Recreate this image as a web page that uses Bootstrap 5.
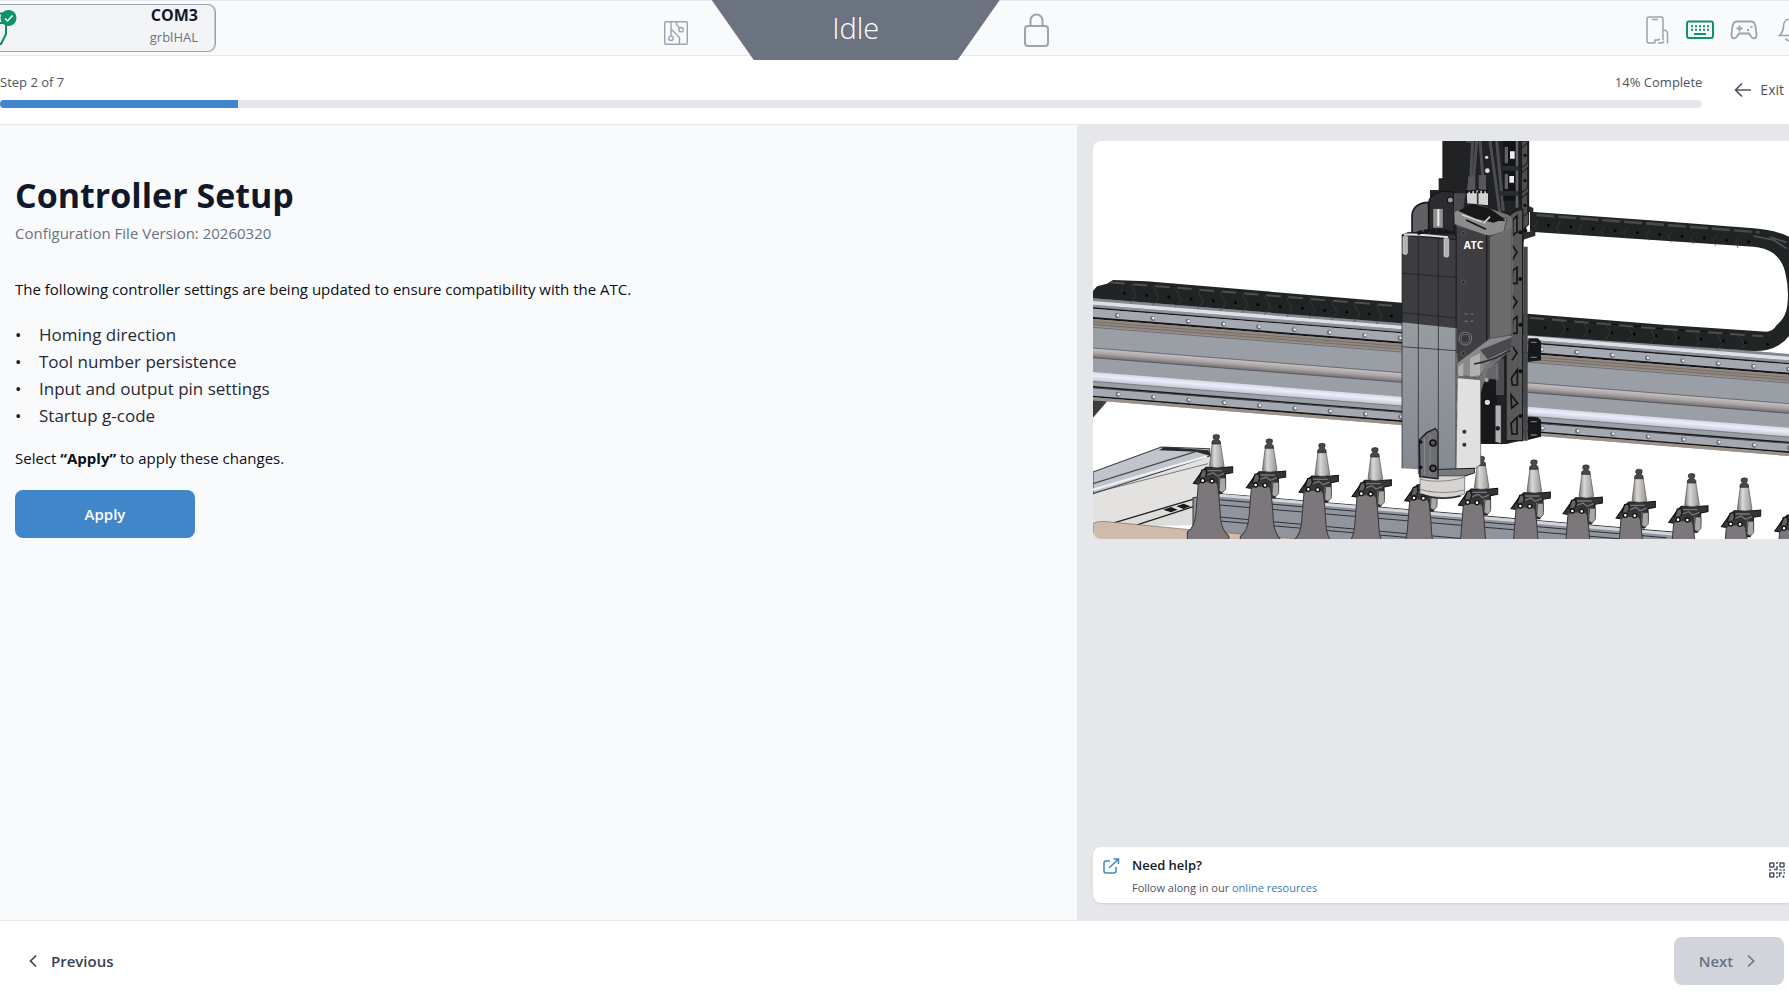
<!DOCTYPE html>
<html lang="en">
<head>
<meta charset="utf-8">
<meta name="viewport" content="width=device-width, initial-scale=1">
<title>Controller Setup</title>
<link href="https://cdn.jsdelivr.net/npm/bootstrap@5.3.0/dist/css/bootstrap.min.css" rel="stylesheet">
<style>
body{font-family:"Open Sans","Noto Sans",sans-serif;font-size:15px;line-height:24px;color:#111827;background:#fff;overflow-x:hidden}
.topbar{height:56px;background:#f9fafc;border-top:1px solid #e5e7eb;border-bottom:1px solid #e5e7eb}
.side-start{flex:26 1 0;min-width:0}
.side-end{flex:29 1 0;min-width:0;overflow:hidden}
.port{width:216px;height:48px;background:#f3f4f6;border:1px solid #9ca3af;border-left:0;border-radius:0 8px 8px 0;box-shadow:inset -1px 0 #c3c7ce;padding-right:17px}
.port-name{font-size:16px;line-height:22px;font-weight:700}
.port-fw{font-size:13px;line-height:22px;color:#6b7280}
.state{width:288px;height:60px;margin-top:-1px;background:#6b7280;color:#fff;clip-path:polygon(0 0,100% 0,85.4% 100%,14.6% 100%);font-size:29px;font-weight:300;z-index:2}
.tool-btn{background:none;border:0;padding:0;line-height:0;color:#9ca3af;flex:none}
.steps{border-bottom:1px solid #e5e7eb;padding:16px 5px 16px 0;color:#4b5563;font-size:13px}
.steps .step-text{line-height:20px;margin-bottom:8px}
.steps .progress{height:8px;border-radius:8px;background:#e5e7eb}
.steps .progress-bar{background:#4086c9}
.exit-btn{background:none;border:0;padding:0;color:#4b5563;font-size:14px;margin-left:32px}
.info-pane{flex:0 0 60.2%;background:#f9fafc;padding:48px 15px}
.info-pane h1{font-size:34px;line-height:44px;font-weight:700;margin:0 0 4px}
.version{color:#6b7280}
.blk{color:#0b0f16}
.settings{font-size:17px;line-height:27px;color:#1f2937;margin:20px 0 17px}
.settings li::before{content:"•";display:inline-block;width:24px;color:#111827}
.apply-btn{width:180px;height:48px;margin-top:20px;background:#4086c9;color:#fff;font-weight:600;font-size:15px;border:0;border-radius:8px}
.media-pane{background:#e5e7eb;padding:16px 0 17px 16px;min-width:0}
.machine{display:block;width:100%;height:auto;background:#fff;border-radius:8px 0 0 8px}
.help{background:#fff;border-radius:8px 0 0 8px;height:56px;padding:8px 4px 8px 10px;box-shadow:0 1px 2px rgba(0,0,0,.1)}
.help-icon{margin-top:3px}
.help-title{font-size:13px;line-height:20px;font-weight:600}
.help-text{font-size:11px;line-height:16px;color:#4b5563;margin-top:5px}
.help-text a{color:#3d77b5;text-decoration:none}
.qr-btn{margin-top:7px}
.foot{border-top:1px solid #e5e7eb;padding:16px 5px 21px 29px}
.nav-btn{height:48px;border:0;border-radius:8px;font-size:15px;font-weight:600;background:none;color:#374151;padding:0;gap:14px}
.nav-next{width:110px;background:#d1d5db;color:#6b7280}
</style>
<script src="https://cdn.jsdelivr.net/npm/bootstrap@5.3.0/dist/js/bootstrap.bundle.min.js"></script>
</head>
<body>
<div class="d-flex flex-column min-vh-100">

<header class="topbar d-flex">
  <div class="side-start d-flex align-items-center justify-content-between">
    <div class="port d-flex justify-content-between align-items-center">
      <svg width="20" height="46" viewBox="0 4 20 46" fill="none" aria-hidden="true"><path d="M0 12.500H6M0 22H6V33L1 43H0" stroke="#0d8a61" stroke-width="2"/><circle cx="8.500" cy="17" r="8" fill="#0d9467"/><path d="M5 17.500l2.500 2.500 5-5.500" stroke="#fff" stroke-width="1.500"/></svg>
      <div class="text-end pb-1"><div class="port-name">COM3</div><div class="port-fw">grblHAL</div></div>
    </div>
  </div>
  <div class="d-flex align-items-start">
    <button class="tool-btn mt-3 me-4 pt-1" aria-label="Board"><svg width="24" height="24" viewBox="0 0 24 24" fill="none" stroke="currentColor" stroke-width="1.400"><rect x=".700" y=".700" width="22.600" height="22.600" rx="1"/><path d="M7 1v14M7 8l8.500 8.500V23M12.500 1v2.500l3 3.500"/><circle cx="7" cy="17.300" r="2.200"/><circle cx="17" cy="8.700" r="2.200"/></svg></button>
    <div class="state d-flex align-items-center justify-content-center pb-1">Idle</div>
    <button class="tool-btn ms-4 mt-2 pt-1" aria-label="Unlock"><svg width="25" height="34" viewBox="0 0 25 34" fill="none" stroke="currentColor" stroke-width="2"><rect x="1" y="13" width="23" height="20" rx="3"/><path d="M6.500 13V7.500a6 6 0 0 1 12 0V13"/></svg></button>
  </div>
  <div class="side-end d-flex align-items-center justify-content-end pt-1">
    <button class="tool-btn" aria-label="Remote"><svg width="24" height="28" viewBox="0 0 24 28" fill="none" stroke="currentColor" stroke-width="1.500"><path d="M9 27H3a2 2 0 0 1-2-2V3a2 2 0 0 1 2-2h12a2 2 0 0 1 2 2v21M6 3.500h6M9 27v-3h3l2-1M12 27h4c1 0 1-1 2-2M17 14c3 0 4.500 1 4.500 4v9.500"/></svg></button>
    <button class="tool-btn ms-3" aria-label="Keyboard"><svg width="28" height="20" viewBox="0 0 28 20" fill="none" stroke="#0d9467"><rect x="1" y="1.500" width="26" height="16.500" rx="2" stroke-width="2"/><path d="M5 6.200h18M5 9.800h18" stroke-width="2" stroke-dasharray="2 2"/><path d="M8 14h12" stroke-width="2"/></svg></button>
    <button class="tool-btn ms-3" aria-label="Gamepad"><svg width="28" height="20" viewBox="0 0 28 20" fill="none" stroke="currentColor" stroke-width="1.800"><path d="M7 1.500h14c3 0 4 2 4.500 5l1 8c.500 4-3 5-5 2.500l-2.500-3.500H9L6.500 17c-2 2.500-5.500 1.500-5-2.500l1-8c.500-3 1.500-5 4.500-5z"/><path d="M9.500 5.500v6M6.500 8.500h6M17 10h2M20.500 7h2"/></svg></button>
    <button class="tool-btn ms-3 ps-1" aria-label="Notifications"><svg width="11" height="24" viewBox="2 0 11 24" fill="none" stroke="currentColor" stroke-width="1.700"><path d="M13 1.500C9 1.500 7.500 5 7.500 8c0 5-1.500 7-4 9.500H13M9.500 20.500c1 2 2 2 3.500 2.200"/></svg></button>
  </div>
</header>

<section class="steps d-flex align-items-center">
  <div class="flex-grow-1">
    <div class="step-text d-flex justify-content-between"><span>Step 2 of 7</span><span>14% Complete</span></div>
    <div class="progress" role="progressbar" aria-label="Setup progress" aria-valuenow="14" aria-valuemin="0" aria-valuemax="100"><div class="progress-bar" style="width:14%"></div></div>
  </div>
  <button class="exit-btn d-flex align-items-center"><svg class="me-2" width="18" height="16" viewBox="0 0 18 16" fill="none" stroke="currentColor" stroke-width="1.700"><path d="M17 8H1.500M8 1.500L1.500 8 8 14.500"/></svg>Exit</button>
</section>

<main class="d-flex flex-grow-1">
  <section class="info-pane">
    <h1>Controller Setup</h1>
    <div class="version">Configuration File Version: 20260320</div>
    <p class="blk mb-0 mt-4 pt-2">The following controller settings are being updated to ensure compatibility with the ATC.</p>
    <ul class="settings list-unstyled">
      <li>Homing direction</li>
      <li>Tool number persistence</li>
      <li>Input and output pin settings</li>
      <li>Startup g-code</li>
    </ul>
    <p class="blk mb-0">Select <b>“Apply”</b> to apply these changes.</p>
    <button class="apply-btn">Apply</button>
  </section>

  <aside class="media-pane flex-grow-1 d-flex flex-column justify-content-between">
    <svg class="machine" viewBox="0 0 2088 1194" role="img" aria-label="CNC gantry with automatic tool changer">
      <defs>
        <linearGradient id="tube" x2="0" y2="1"><stop offset="0" stop-color="#c9c3c3"/><stop offset=".5" stop-color="#aaa4a5"/><stop offset="1" stop-color="#716d70"/></linearGradient>
        <linearGradient id="cone"><stop offset="0" stop-color="#777"/><stop offset=".35" stop-color="#dad8d6"/><stop offset="1" stop-color="#969290"/></linearGradient>
        <linearGradient id="shine" x2="0" y2="1"><stop offset="0" stop-color="#d6d9e4"/><stop offset=".4" stop-color="#eceffb"/><stop offset="1" stop-color="#c0c4d0"/></linearGradient>
        <linearGradient id="lower" x2="0" y2="1"><stop offset="0" stop-color="#979ca1"/><stop offset="1" stop-color="#858991"/></linearGradient>
        <g id="holder">
          <path d="M-44 112l14-14h58l22-2v18l-22 4v36l-10 22h-16l-8-20-62-10z" fill="#343436" stroke="#111" stroke-width="3"/>
          <path d="M-26 108h44M-30 122l22-8 12 10 20-8M10 128v28" stroke="#75757a" stroke-width="4" fill="none"/>
          <path d="M12 130h17v34l-10 10-10-6z" fill="#aaa8a6" stroke="#333" stroke-width="2"/>
          <path d="M-50 130l8-24 12-2 2 14-8 20z" fill="#626166" stroke="#151515" stroke-width="4"/>
          <path d="M-52 134q24-12 52 0l5 18q6 50 8 92 2 40 26 62v60H-86v-74q22-14 26-58z" fill="#7b777b" stroke="#39383b" stroke-width="3"/>
          <path d="M-52 134l8-6h36l10 8 4 16-8-8-40-2-10 8z" fill="#38383a"/>
          <circle cx="-40" cy="138" r="6" fill="#fff" stroke="#111" stroke-width="4"/><circle cx="-12" cy="139" r="6" fill="#fff" stroke="#111" stroke-width="4"/>
          <path d="M-11 24h24l11 70q-22 10-44 0z" fill="url(#cone)" stroke="#55504e" stroke-width="2"/>
          <path d="M-8 2q9-5 18 0v8l-3 4 6 6v8h-25v-8l7-6-4-4z" fill="#48484a" stroke="#222" stroke-width="2"/>
        </g>
      </defs>

      <!-- side arm and bed -->
      <path d="M0 775h48L0 830z" fill="#3d3d40"/>
      <path d="M0 1000l210-72 140 8-8 110-46 32-228 92-68-18z" fill="#e3e2e0"/>
      <path d="M0 993l205-75 145 5v22L0 1058z" fill="#c1c4ca" stroke="#3b3c3f" stroke-width="3"/>
      <path d="M0 1028l310-97" stroke="#48494c" stroke-width="4"/><path d="M0 1046l342-100" stroke="#eef0f4" stroke-width="7"/><path d="M0 1056l345-88" stroke="#444" stroke-width="2"/>
      <path d="M198 928l16-10 132 10 10 18-48-14z" fill="#292a2c"/>
      <path d="M68 1144l240-78 60 10v75L130 1156z" fill="#dddddb"/><path d="M60 1146l250-74M130 1152l180-58" stroke="#222" stroke-width="4"/>
      <path d="M210 1106l24-8 20 8-20 8zM250 1096l22-8 20 8-20 8z" fill="#181818"/>
      <path d="M300 1070l80-12 1420 120v40H300z" fill="#90959d" stroke="#333" stroke-width="3"/>
      <path d="M380 1063l1420 121" stroke="#d2d5dc" stroke-width="9"/><path d="M380 1076l1340 114M380 1092l1280 108M380 1128l900 80M380 1140l800 70" stroke="#2e3033" stroke-width="3"/>
      <path d="M0 1148q10-8 42-6l250 24 350 30H0z" fill="#d0baa9" stroke="#786b60" stroke-width="2"/>

      <!-- beam -->
      <g transform="skewY(4.574)">
        <rect y="472" width="2088" height="306" fill="#9a9ea5"/>
        <rect y="472" width="2088" height="14" fill="#84888e"/><rect y="480" width="2088" height="11" fill="#dde0e7"/><rect y="491" width="2088" height="9" fill="#8f949b"/>
        <rect y="499" width="2088" height="4" fill="#17181a"/><rect y="503" width="2088" height="26" fill="#a4a9b1"/><rect y="528" width="2088" height="6" fill="#141416"/>
        <rect y="534" width="2088" height="22" fill="#91887f"/><path d="M0 542h2088M0 550h2088" stroke="#6a625b" stroke-width="2"/><path d="M0 559h2088" stroke="#56575a" stroke-width="2"/>
        <rect y="621" width="2088" height="29" fill="url(#tube)"/><path d="M0 621h2088M0 650h2088" stroke="#4a4a4d" stroke-width="2"/>
        <rect y="693" width="2088" height="28" fill="url(#shine)"/><path d="M0 721h2088" stroke="#63666c" stroke-width="2"/>
        <rect y="735" width="2088" height="5" fill="#17181a"/><rect y="742" width="2088" height="24" fill="#a4a9b1"/><path d="M0 740h2088" stroke="#44464a" stroke-width="3"/><rect y="764" width="2088" height="5" fill="#141416"/><rect y="769" width="2088" height="9" fill="#9b9188"/>
        <g fill="none" stroke-linecap="round"><path d="M73 518h2020M75 754h2020" stroke="#6b6e73" stroke-width="15" stroke-dasharray="0 106"/><path d="M75 517h2020M77 753h2020" stroke="#eee" stroke-width="8" stroke-dasharray="0 106"/></g>
      </g>

      <!-- cable chain -->
      <path d="M0 450l12-14 30-8 18-11 100 4 767 64 364 32 420 34 310 21q20-2 30-20 28-22 32-60 6-50-7-100-8-34-35-55-26-18-60-20L1311 272V212l360 26 310 24q60 4 107 25V585q-24 32-67 42-30 6-80 0L1291 582 927 547 0 472z" fill="#202424"/>
      <path d="M52 424l870 72M1310 530l400 34 300 22" stroke="#4b504f" stroke-width="6" stroke-dasharray="44 23"/><path d="M1330 222l340 26 330 26" stroke="#454a49" stroke-width="8" stroke-dasharray="54 12"/>
      <path d="M1981 285l60 12 40 26M2030 288l50 16" stroke="#505356" stroke-width="5" fill="none"/>
      <g fill="none" stroke="#050606" stroke-width="9" stroke-linecap="round" stroke-dasharray="0 67"><path d="M94 457l830 70M1366 252l610 51M1356 560l670 50"/></g>
      <g fill="none" stroke="#3c4140" stroke-width="2"><path d="M112 430l18 35-18 22M179 436l18 35-18 22M246 441l18 35-18 22M313 447l18 35-18 22M380 453l18 35-18 22M447 458l18 35-18 22M514 464l18 35-18 22M581 470l18 35-18 22M648 475l18 35-18 22M715 481l18 35-18 22M782 487l18 35-18 22M849 492l18 35-18 22M1336 236l-12 18 8 16M1403 241l-12 18 8 16M1470 247l-12 18 8 16M1537 253l-12 18 8 16M1604 258l-12 18 8 16M1671 264l-12 18 8 16M1738 270l-12 18 8 16M1805 275l-12 18 8 16M1872 281l-12 18 8 16M1939 287l-12 18 8 16M1400 530l18 35-16 20M1467 536l18 35-16 20M1534 542l18 35-16 20M1601 548l18 35-16 20M1668 554l18 35-16 20M1735 560l18 35-16 20M1802 566l18 35-16 20M1869 572l18 35-16 20M1936 578l18 35-16 15"/></g>

      <!-- tool rack -->
      <use href="#holder" x="369" y="881"/><use href="#holder" x="528" y="894"/><use href="#holder" x="686" y="907"/><use href="#holder" x="845" y="920"/><use href="#holder" x="1003" y="933"/><use href="#holder" x="1164" y="946"/><use href="#holder" x="1322" y="957"/><use href="#holder" x="1478" y="972"/><use href="#holder" x="1637" y="985"/><use href="#holder" x="1795" y="998"/><use href="#holder" x="1953" y="1011"/><use href="#holder" x="2113" y="1024"/>

      <!-- spindle carriage -->
      <g transform="translate(861 -63)">
        <path d="M187 63H447V280L430 370V960L380 972H300V700H150V210H176V175H187z" fill="#202224"/>
        <path d="M258 63h20l-6 110-10 45M290 63l-10 120M300 63l10 130M330 63l30 220M350 63l20 210" stroke="#4c4d50" stroke-width="9" fill="none"/>
        <path d="M264 170h22v45h-22zM296 165h22v45h-22z" fill="#55575a"/><path d="M258 215l36-6 32 4v45l-66-6z" fill="#d2d2d1" stroke="#222" stroke-width="4"/><path d="M258 215h66" stroke="#111" stroke-width="9" stroke-dasharray="7 5"/><path d="M293 215v42" stroke="#333" stroke-width="5"/>
        <path d="M370 63h48v180h-48z" fill="#131416"/><path d="M374 80h10v50h-10zM374 162h10v45h-10zM407 63h8v200h-8z" fill="#606266"/><path d="M390 94h14v22h-14zM388 168h14v20h-14z" fill="#eee"/><path d="M366 145h50M360 220h56" stroke="#2a2c2f" stroke-width="14"/>
        <path d="M424 63h22v250l-22 20z" fill="#4c4d50" stroke="#181818" stroke-width="3"/><path d="M425 83l18-15v60l-18 15M425 158l18-15v60l-18 15M425 233l18-15v60l-18 15" fill="none" stroke="#19191a" stroke-width="3"/><g fill="#111"><circle cx="435" cy="106" r="5"/><circle cx="435" cy="182" r="5"/><circle cx="435" cy="256" r="5"/><circle cx="436" cy="332" r="6"/></g>
        <path d="M446 258l14 6v12h-14zM430 335h36v12l-36 12z" fill="#2b2c2e"/>
        <circle cx="322" cy="152" r="7" fill="#ddd"/><circle cx="320" cy="112" r="5" fill="#ddd"/>
        <path d="M96 340V285q4-36 50-38v90z" fill="#606164" stroke="#1a1a1b" stroke-width="5"/><path d="M147 240q10-22 45-26l30 2v120h-74z" fill="#2b2c2f" stroke="#111" stroke-width="3"/><circle cx="211" cy="240" r="9" fill="#9a9a9a" stroke="#111" stroke-width="3"/>
        <path d="M158 265h32v60h-32z" fill="#8e9091" stroke="#222" stroke-width="3"/><path d="M172 268h6v50h-6z" fill="#eee"/>
        <path d="M222 220h34l-6 50-28 25z" fill="#4a4b4e"/>
        <path d="M384 290q20-20 44-22V962H378V700l10-14z" fill="#58595b" stroke="#1a1a1b" stroke-width="4"/><path d="M430 380h13v582h-13z" fill="#464749"/>
        <g fill="#58595c" stroke="#151515" stroke-width="5"><path d="M398 300l13-12v48l-13 10zM396 375l15 22-15 24M398 452l13-10v48h-15zM396 526l15 20-15 22M398 600l13-10v50h-15zM396 677l15 22-15 22M394 775l18-26v46h-15zM393 824l20 26-18 14zM393 910l18-18v50h-15z"/></g>
        <g fill="#111"><circle cx="421" cy="337" r="6"/><circle cx="421" cy="477" r="6"/><circle cx="421" cy="614" r="6"/><circle cx="421" cy="754" r="6"/><circle cx="421" cy="888" r="6"/></g>
        <path d="M445 655h28l10 10v56l-40 5zM443 890l30 2 10 8v50l-40 10z" fill="#17181a"/><path d="M452 667h18M452 712h18M452 905h18M452 945h18" stroke="#707276" stroke-width="4"/>
        <path d="M303 770h48v200h-48z" fill="#16181a"/><path d="M345 855h19v116l-19-4z" fill="#aeb0b3" stroke="#222" stroke-width="3"/><circle cx="319" cy="779" r="9" fill="#aaa" stroke="#222" stroke-width="4"/><circle cx="322" cy="847" r="10" fill="#ddd" stroke="#111" stroke-width="4"/><circle cx="353" cy="925" r="7" fill="#222"/><path d="M348 715h24v110h-24z" fill="#4b4c4f"/>

        <path d="M66 345L228 358 230 625 66 607z" fill="#3d3c41"/><path d="M66 607l164 18-2 430L66 1045z" fill="url(#lower)"/>
        <path d="M66 345l162 13M66 460l162 12M66 578l162 16M66 680l162 12M115 352v710M175 356v576M228 355v702M66 345v700" stroke="#18191c" stroke-width="2" fill="none"/>
        <path d="M66 345l20-8 140 6 4 16z" fill="#303235" stroke="#111" stroke-width="2"/><path d="M72 344q40-3 132 8" fill="none" stroke="#e2e2e2" stroke-width="6"/><path d="M112 340q40-14 100-4" fill="none" stroke="#17181a" stroke-width="12" stroke-dasharray="16 4"/>
        <path d="M69 350h13v50l-4 4-9-3zM192 356h14v52l-4 4-10-3z" fill="#b4b2b0" stroke="#ddd" stroke-width="2"/>

        <path d="M222 275l70-22 94 32 12 12v390l-75 60-20 70-70-40V330z" fill="#737374"/>
        <path d="M222 275l24-10 65 20 70 10-12 50-50 2-96-34z" fill="#8b8c8c" stroke="#333" stroke-width="2"/><path d="M240 272l40-18 48 14 40 28-28 10-52-12zM258 300l60 28M310 295l64 6" fill="#17181a" stroke="#17181a" stroke-width="5"/><path d="M246 284l60 22M330 290l-20 20" stroke="#d0d0d0" stroke-width="5"/>
        <path d="M230 318l96 30 70-22v322l-66 20-98 62z" fill="#3f3e43"/><path d="M330 350l65-28v320l-65 28z" fill="#6c6c6d"/><path d="M320 345v318" stroke="#18191b" stroke-width="4"/>
        <path d="M230 730l100-75 66-10v40l-70 46-30 42-66-8z" fill="#8a8a8b" stroke="#414144" stroke-width="2"/><path d="M300 690l95-38v32l-72 34z" fill="#48494c"/><path d="M270 715l30-15v65l-30 5zM235 740l15-12v40h-15z" fill="#b0b0af"/><path d="M282 732q60-10 110-42" stroke="#2e2e30" stroke-width="5" fill="none"/><path d="M310 730h45v50l-45-6z" fill="#77787a" opacity=".8"/>
        <circle cx="256" cy="656" r="19" fill="#38373b" stroke="#77777a" stroke-width="3"/><circle cx="256" cy="656" r="13" fill="none" stroke="#88888a" stroke-width="2"/>
        <g fill="#29292c" stroke="#74747a" stroke-width="2"><circle cx="250" cy="340" r="6"/><circle cx="250" cy="486" r="6"/><circle cx="250" cy="700" r="6"/></g><path d="M254 582h36M254 604h36" stroke="#828286" stroke-width="3" stroke-dasharray="8 10"/>
        <text x="251" y="387" font-family="Open Sans, sans-serif" font-size="31" font-weight="700" fill="#fff">ATC</text>

        <path d="M232 773l70 6v254l-22 16-52 6z" fill="#e2e0de" stroke="#4a4a4a" stroke-width="2"/><circle cx="253" cy="935" r="6" fill="#333"/><circle cx="253" cy="974" r="6" fill="#333"/>
        <path d="M118 1050l165-5v14l-30 10H118z" fill="#77797c" stroke="#222" stroke-width="3"/>
        <path d="M120 1068h134v54q-60 22-134 0z" fill="#d6d4d2" stroke="#555" stroke-width="2"/><path d="M120 1078q60 14 134-6M120 1108q60 18 134 2" stroke="#8c8a88" stroke-width="3" fill="none"/><path d="M122 1122q55 22 120 6" stroke="#2a2a2a" stroke-width="5" fill="none"/>
        <path d="M118 960l22-22 26-12 8 10v140l-54-6z" fill="#6c6e72" stroke="#1d1e20" stroke-width="4"/><path d="M134 955v110M150 945v120" stroke="#8a8c90" stroke-width="3"/><g fill="#555" stroke="#101010" stroke-width="5"><circle cx="159" cy="969" r="9"/><circle cx="159" cy="1045" r="9"/><circle cx="122" cy="966" r="3"/><circle cx="122" cy="1042" r="3"/></g>
      </g>
    </svg>

    <div class="help d-flex justify-content-between align-items-start">
      <div class="d-flex align-items-start">
        <svg class="help-icon me-2" width="17" height="16" viewBox="0 0 17 16" fill="none" stroke="#4086c9" stroke-width="1.500"><path d="M7 3H3a2 2 0 0 0-2 2v8a2 2 0 0 0 2 2h8a2 2 0 0 0 2-2V9M6 10l9.500-9M10.500 1h5v5"/></svg>
        <div class="ms-1"><div class="help-title">Need help?</div><div class="help-text">Follow along in our <a href="#">online resources</a></div></div>
      </div>
      <button class="tool-btn qr-btn" aria-label="Show QR code"><svg width="16" height="16" viewBox="0 0 16 16" fill="none" stroke="#4b5563" stroke-width="1.500"><rect x=".800" y="1" width="4" height="4" rx=".500"/><rect x="11" y="1" width="4" height="4" rx=".500"/><rect x=".800" y="11" width="4" height="4" rx=".500"/><path d="M8 0v2M8 4v3.500H5M0 8h2M10.500 8h2M14 8h2M8 10v2M8 14v2M10.500 15v-4H13M14.500 11H16M14.500 13.500V16"/></svg></button>
    </div>
  </aside>
</main>

<footer class="foot d-flex justify-content-between">
  <button class="nav-btn d-flex align-items-center"><svg width="8" height="14" viewBox="0 0 8 14" fill="none" stroke="currentColor" stroke-width="1.600"><path d="M7.200 1.500L1.500 7l5.700 5.500"/></svg>Previous</button>
  <button class="nav-btn nav-next d-flex align-items-center justify-content-center pe-1" disabled>Next<svg width="8" height="14" viewBox="0 0 8 14" fill="none" stroke="currentColor" stroke-width="1.600"><path d="M1 1.500L6.700 7 1 12.500"/></svg></button>
</footer>
</div>
</body>
</html>
